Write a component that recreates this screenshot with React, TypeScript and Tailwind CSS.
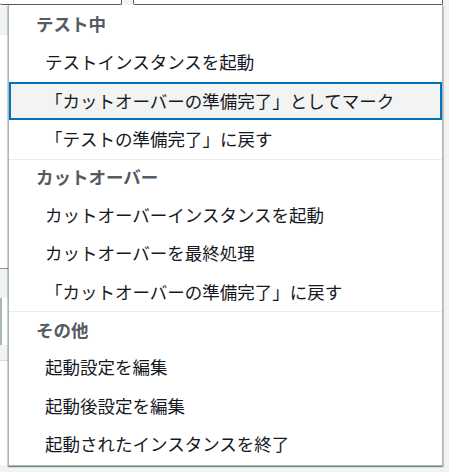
import React from "react"

type Group = {
  title: string
  items: string[]
}

const groups: Group[] = [
  {
    title: "テスト中",
    items: [
      "テストインスタンスを起動",
      "「カットオーバーの準備完了」としてマーク",
      "「テストの準備完了」に戻す",
    ],
  },
  {
    title: "カットオーバー",
    items: [
      "カットオーバーインスタンスを起動",
      "カットオーバーを最終処理",
      "「カットオーバーの準備完了」に戻す",
    ],
  },
  {
    title: "その他",
    items: ["起動設定を編集", "起動後設定を編集", "起動されたインスタンスを終了"],
  },
]

const highlighted = "「カットオーバーの準備完了」としてマーク"

export default function App() {
  return (
    <div
      className="relative w-[449px] h-[472px] overflow-hidden bg-[#f2f3f3]"
      style={{ fontFamily: '"Noto Sans CJK JP", "Noto Sans", sans-serif' }}
    >
      {/* page behind the menu */}
      <div className="flex h-[5px] items-end">
        <div className="h-[10px] w-[122px] rounded-b-[2px] border-b border-r border-[#545b64] bg-white" />
        <div className="ml-[11px] h-[10px] w-[310px] rounded-b-[2px] border-b border-l border-r border-[#545b64] bg-white" />
      </div>
      <div className="flex w-[443px] flex-col">
        <div className="h-[30px] border-b border-[#eaeded] bg-[#f2f3f3]" />
        <div className="h-[234px] border-b border-[#879596] bg-white" />
        <div className="h-[92px] border-b border-[#d5dbdb] bg-[#f2f3f3] pt-[29px]">
          <div className="h-[47px] w-[100px] border-l-2 border-[#aab7b8] bg-white" />
        </div>
        <div className="h-[104px] bg-white" />
      </div>

      {/* dropdown menu */}
      <div className="absolute left-[8px] top-[5px] w-[435px] border-x border-b border-[#aab7b8] bg-white shadow-[0_1px_1px_0_rgba(0,28,36,0.3),1px_1px_1px_0_rgba(0,28,36,0.15),-1px_1px_1px_0_rgba(0,28,36,0.15)]">
        {groups.map((group, gi) => (
          <div key={group.title} className={gi > 0 ? "border-t border-[#eaeded]" : ""}>
            <div
              className={`flex items-center px-[27px] text-[17.5px] font-bold text-[#545b64] ${
                gi === 0 ? "h-[38px]" : "h-[36px]"
              }`}
            >
              {group.title}
            </div>
            <ul>
              {group.items.map((item) => (
                <li
                  key={item}
                  className={`flex h-[38.5px] items-center border-2 px-[34px] text-[17.5px] text-[#16191f] ${
                    item === highlighted ? "border-[#0073bb] bg-[#f2f3f3]" : "border-transparent"
                  }`}
                >
                  {item}
                </li>
              ))}
            </ul>
          </div>
        ))}
        <div className="h-[1.5px]" />
      </div>
    </div>
  )
}
